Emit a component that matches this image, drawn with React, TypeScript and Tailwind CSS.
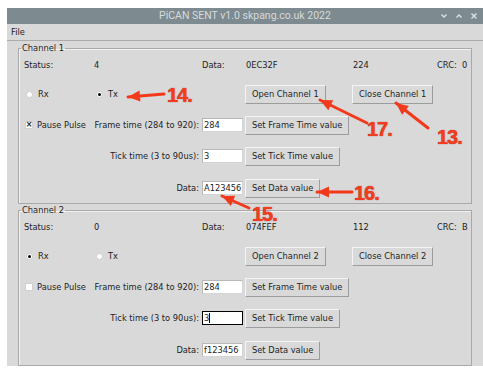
import React from 'react'

type Arrow = { tail: [number, number]; tip: [number, number] }

const arrows: Arrow[] = [
  { tail: [164, 94], tip: [128, 97] },
  { tail: [367, 123], tip: [320, 100] },
  { tail: [428, 128], tip: [396, 103] },
  { tail: [249, 208], tip: [222, 196] },
  { tail: [352, 192], tip: [317, 192] },
]

const marks = [
  { text: '14.', x: 167, y: 87 },
  { text: '17.', x: 367, y: 121 },
  { text: '13.', x: 437, y: 129 },
  { text: '16.', x: 354, y: 185 },
  { text: '15.', x: 252, y: 206 },
]

function headPoints({ tail, tip }: Arrow) {
  const dx = tip[0] - tail[0]
  const dy = tip[1] - tail[1]
  const len = Math.hypot(dx, dy)
  const ux = dx / len
  const uy = dy / len
  const bx = tip[0] - ux * 12
  const by = tip[1] - uy * 12
  const px = -uy * 5.5
  const py = ux * 5.5
  return `${tip[0]},${tip[1]} ${bx + px},${by + py} ${bx - px},${by - py}`
}

function Radio({ checked, label }: { checked: boolean; label: string }) {
  return (
    <div className="flex items-center gap-[5px] ml-[2px]">
      <span className="w-[7px] h-[7px] rounded-full bg-white border border-[#cfcfcf] flex items-center justify-center">
        {checked && <span className="w-[3px] h-[3px] rounded-full bg-black" />}
      </span>
      <span>{label}</span>
    </div>
  )
}

function Check({ checked, label }: { checked: boolean; label: string }) {
  return (
    <div className="flex items-center gap-[4px] ml-[1px]">
      <span className="w-[8px] h-[8px] bg-white border border-[#d0d0d0] flex items-center justify-center text-[8px] leading-none font-bold">
        {checked ? '×' : ''}
      </span>
      <span>{label}</span>
    </div>
  )
}

function Btn({ children }: { children: React.ReactNode }) {
  return (
    <button className="h-[19px] px-[6px] bg-[#d9d9d9] border border-t-[#f4f4f4] border-l-[#f4f4f4] border-r-[#9c9c9c] border-b-[#9c9c9c] leading-none whitespace-nowrap">
      {children}
    </button>
  )
}

function Field({ value, focused }: { value: string; focused?: boolean }) {
  return (
    <div
      className={`ml-[1px] w-[41px] h-[14px] bg-white pl-[1px] flex items-center leading-none ${
        focused ? 'border border-black' : 'border border-[#d4d4d4] border-t-[#b8b8b8] border-l-[#b8b8b8]'
      }`}
    >
      {value}
      {focused && <span className="w-px h-[10px] bg-black" />}
    </div>
  )
}

type ChannelProps = {
  n: number
  status: string
  hex: string
  num: string
  crc: string
  tx: boolean
  paused: boolean
  data: string
  tickFocused?: boolean
}

function Channel({ n, status, hex, num, crc, tx, paused, data, tickFocused }: ChannelProps) {
  return (
    <fieldset className="mx-[11px] border border-[#a9a9a9] shadow-[inset_1px_1px_0_#f2f2f2]">
      <legend className="ml-[2px] px-[1px] h-[10px] leading-[10px]">Channel {n}</legend>
      <div className="ml-[5px] grid grid-cols-[70px_107px_44px_107px_85px_1fr] grid-rows-[24px_34px_28px_34px_30px] items-center">
        <span>Status:</span>
        <span>{status}</span>
        <span className="pl-[1px]">Data:</span>
        <span className="pl-[1px]">{hex}</span>
        <span className="pl-[1px]">{num}</span>
        <span>CRC:&nbsp; {crc}</span>

        <Radio checked={!tx} label="Rx" />
        <Radio checked={tx} label="Tx" />
        <span />
        <div><Btn>Open Channel {n}</Btn></div>
        <div><Btn>Close Channel {n}</Btn></div>
        <span />

        <Check checked={paused} label="Pause Pulse" />
        <span className="text-right pr-[2px] whitespace-nowrap">Frame time (284 to 920):</span>
        <Field value="284" />
        <div><Btn>Set Frame Time value</Btn></div>
        <span />
        <span />

        <span />
        <span className="text-right pr-[2px] whitespace-nowrap">Tick time (3 to 90us):</span>
        <Field value="3" focused={tickFocused} />
        <div><Btn>Set Tick Time value</Btn></div>
        <span />
        <span />

        <span />
        <span className="text-right pr-[2px]">Data:</span>
        <Field value={data} />
        <div><Btn>Set Data value</Btn></div>
        <span />
        <span />
      </div>
    </fieldset>
  )
}

export default function App() {
  return (
    <div className="relative w-[483px] h-[374px] bg-white pt-[8px] pl-[7px] overflow-hidden font-['DejaVu_Sans',sans-serif] text-[8.3px] text-[#1e1e1e]">
      <div className="h-[358px] bg-[#d9d9d9] flex flex-col overflow-hidden">
        {/* title bar */}
        <div className="relative h-[17px] bg-[#7d8a8f] flex items-center justify-center text-[#d6dbdc] font-['Roboto',sans-serif] text-[10.5px]">
          PiCAN SENT v1.0 skpang.co.uk 2022
          <div className="absolute right-[6px] top-0 h-full flex items-center gap-[9px]">
            <svg width="6" height="4" viewBox="0 0 6 4"><path d="M0.5 0.5 L3 3 L5.5 0.5" fill="none" stroke="#dfe3e4" strokeWidth="1.3" /></svg>
            <svg width="6" height="4" viewBox="0 0 6 4"><path d="M0.5 3.5 L3 1 L5.5 3.5" fill="none" stroke="#dfe3e4" strokeWidth="1.3" /></svg>
            <svg width="6" height="6" viewBox="0 0 6 6"><path d="M0.5 0.5 L5.5 5.5 M5.5 0.5 L0.5 5.5" fill="none" stroke="#dfe3e4" strokeWidth="1.4" /></svg>
          </div>
        </div>
        {/* menu */}
        <div className="h-[19px] flex items-center pl-[4px] border-b border-[#ababab]">File</div>
        <div className="mt-[2px] flex flex-col gap-[1px]">
          <Channel n={1} status="4" hex="0EC32F" num="224" crc="0" tx paused data="A123456" />
          <Channel n={2} status="0" hex="074FEF" num="112" crc="B" tx={false} paused={false} data="f123456" tickFocused />
        </div>
      </div>

      {/* annotations */}
      <svg className="absolute inset-0 pointer-events-none" width="483" height="374">
        {arrows.map((a, i) => (
          <g key={i}>
            <line x1={a.tail[0]} y1={a.tail[1]} x2={a.tip[0]} y2={a.tip[1]} stroke="#f2391c" strokeWidth="3" strokeLinecap="round" />
            <polygon points={headPoints(a)} fill="#f2391c" />
          </g>
        ))}
      </svg>
      {marks.map((m) => (
        <span
          key={m.text}
          className="absolute font-['Liberation_Sans',sans-serif] font-bold text-[20px] leading-[16px] tracking-[-1px] text-[#f33c1f] [text-shadow:0_0_1px_#9c1a08]"
          style={{ left: m.x, top: m.y }}
        >
          {m.text}
        </span>
      ))}
    </div>
  )
}
